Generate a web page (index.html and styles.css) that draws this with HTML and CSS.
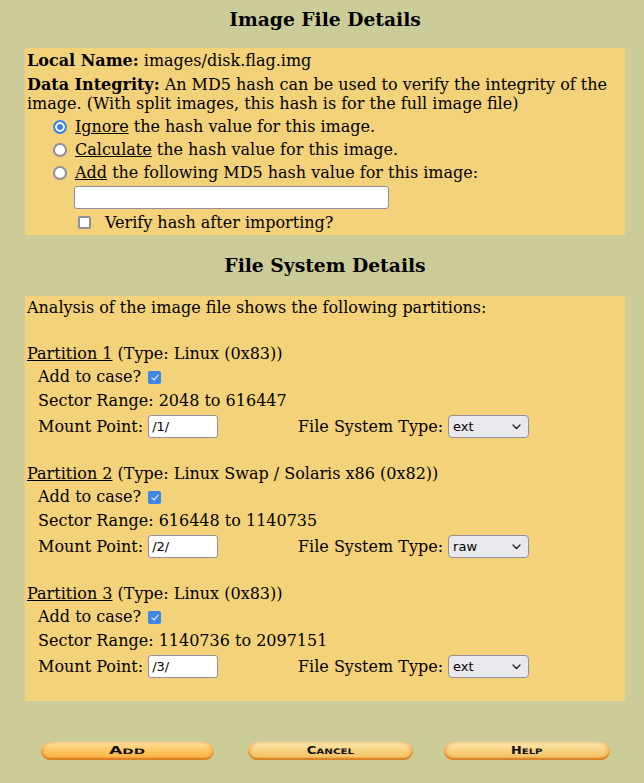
FILE: index.html
```html
<!DOCTYPE html>
<html>
<head>
<meta charset="utf-8">
<title>Add Image</title>
<link rel="stylesheet" href="styles.css">
</head>
<body>
<div class="page">
  <h3 class="title">Image File Details</h3>
  <div class="panel panel-image">
    <div class="row-name"><b>Local Name:</b> images/disk.flag.img</div>
    <div class="integrity">
      <div class="iline"><b>Data Integrity:</b> <span>An MD5 hash can be used to verify the integrity of the</span></div>
      <div class="iline">image. (With split images, this hash is for the full image file)</div>
    </div>
    <label class="opt opt-first"><input type="radio" class="radio" name="hash" checked><span><u>Ignore</u> the hash value for this image.</span></label>
    <label class="opt"><input type="radio" class="radio" name="hash"><span><u>Calculate</u> the hash value for this image.</span></label>
    <label class="opt"><input type="radio" class="radio" name="hash"><span><u>Add</u> the following MD5 hash value for this image:</span></label>
    <div class="md5row"><input type="text" class="field md5"></div>
    <label class="verify"><input type="checkbox" class="check"><span>Verify hash after importing?</span></label>
  </div>

  <h3 class="title title-fs">File System Details</h3>
  <div class="panel panel-fs">
    <div class="line">Analysis of the image file shows the following partitions:</div>
    <div class="line"></div>

    <div class="part">
      <div class="line"><u>Partition 1</u> (Type: Linux (0x83))</div>
      <label class="sub add"><span>Add to case?</span><input type="checkbox" class="check" checked></label>
      <div class="sub sector">Sector Range: 2048 to 616447</div>
      <div class="sub mount">
        <div class="cell"><span>Mount Point:</span><input type="text" class="field mp" value="/1/"></div>
        <div class="cell"><span>File System Type:</span><span class="selwrap"><select class="fs"><option selected>ext</option><option>fat</option><option>ntfs</option><option>raw</option><option>swap</option></select><svg class="chev" width="9" height="6" viewBox="0 0 9 6"><path d="M1 1 L4.5 4.5 L8 1" fill="none" stroke="#222" stroke-width="1.4" stroke-linecap="round" stroke-linejoin="round"/></svg></span></div>
      </div>
    </div>
    <div class="spacer"></div>

    <div class="part">
      <div class="line"><u>Partition 2</u> (Type: Linux Swap / Solaris x86 (0x82))</div>
      <label class="sub add"><span>Add to case?</span><input type="checkbox" class="check" checked></label>
      <div class="sub sector">Sector Range: 616448 to 1140735</div>
      <div class="sub mount">
        <div class="cell"><span>Mount Point:</span><input type="text" class="field mp" value="/2/"></div>
        <div class="cell"><span>File System Type:</span><span class="selwrap"><select class="fs"><option>ext</option><option>fat</option><option>ntfs</option><option selected>raw</option><option>swap</option></select><svg class="chev" width="9" height="6" viewBox="0 0 9 6"><path d="M1 1 L4.5 4.5 L8 1" fill="none" stroke="#222" stroke-width="1.4" stroke-linecap="round" stroke-linejoin="round"/></svg></span></div>
      </div>
    </div>
    <div class="spacer"></div>

    <div class="part">
      <div class="line"><u>Partition 3</u> (Type: Linux (0x83))</div>
      <label class="sub add"><span>Add to case?</span><input type="checkbox" class="check" checked></label>
      <div class="sub sector">Sector Range: 1140736 to 2097151</div>
      <div class="sub mount">
        <div class="cell"><span>Mount Point:</span><input type="text" class="field mp" value="/3/"></div>
        <div class="cell"><span>File System Type:</span><span class="selwrap"><select class="fs"><option selected>ext</option><option>fat</option><option>ntfs</option><option>raw</option><option>swap</option></select><svg class="chev" width="9" height="6" viewBox="0 0 9 6"><path d="M1 1 L4.5 4.5 L8 1" fill="none" stroke="#222" stroke-width="1.4" stroke-linecap="round" stroke-linejoin="round"/></svg></span></div>
      </div>
    </div>
  </div>

  <div class="buttons">
    <button class="btn btn-add" type="button"><span class="lbl"><span class="big">A</span>DD</span></button>
    <button class="btn btn-cancel" type="button"><span class="lbl"><span class="big">C</span>ANCEL</span></button>
    <button class="btn btn-help" type="button"><span class="lbl"><span class="big">H</span>ELP</span></button>
  </div>
</div>
</body>
</html>
```

FILE: styles.css
```css
body {
  margin: 8px 0 0 0;
  background: #cccc99;
  font-family: "DejaVu Serif", serif;
  font-size: 16px;
  color: #000;
}

.page {
  width: 600px;
  margin-left: 25px;
}

.title {
  font-size: 18.72px;
  font-weight: bold;
  text-align: center;
  line-height: 22px;
  margin: 0 0 18px 0;
}

.title-fs {
  margin: 19px 0 20px 0;
}

.panel {
  background: #f4d27a;
  padding: 0 2px;
}

/* form controls */
.radio {
  appearance: none;
  -webkit-appearance: none;
  box-sizing: border-box;
  width: 14px;
  height: 14px;
  border: 2px solid #8f8f9d;
  border-radius: 50%;
  background: #fff;
  flex: none;
}

.radio:checked {
  border-color: #3b84ea;
  background: #3b84ea;
  box-shadow: inset 0 0 0 2px #fff;
}

.check {
  appearance: none;
  -webkit-appearance: none;
  box-sizing: border-box;
  position: relative;
  width: 13px;
  height: 13px;
  border: 2px solid #8f8f9d;
  border-radius: 2px;
  background: #fff;
  flex: none;
}

.check:checked {
  border-color: #3b84ea;
  background: #3b84ea;
}

.check:checked::after {
  content: "";
  position: absolute;
  left: 2.5px;
  top: 0px;
  width: 3px;
  height: 6px;
  border-right: 1.6px solid #fff;
  border-bottom: 1.6px solid #fff;
  transform: rotate(40deg);
}

.field {
  box-sizing: border-box;
  height: 23px;
  margin: 0;
  padding: 0 3px;
  border: 1px solid #8f8f9d;
  border-radius: 3px;
  background: #fff;
  font-family: "DejaVu Sans", sans-serif;
  font-size: 13px;
  color: #000;
}

/* Image file panel */
.panel-image {
  padding-bottom: 1px;
}

.row-name {
  height: 25px;
  line-height: 25px;
}

.integrity {
  margin-top: 3px;
}

.iline {
  height: 18.5px;
  line-height: 18.5px;
  white-space: nowrap;
}

.opt {
  display: flex;
  align-items: center;
  height: 23px;
}

.opt-first {
  margin-top: 2px;
}

.opt .radio {
  margin: 1px 8px 0 26px;
}

.md5row {
  display: flex;
  align-items: center;
  height: 27px;
  padding-left: 47px;
}

.md5 {
  width: 315px;
}

.verify {
  display: flex;
  align-items: center;
  height: 23px;
}

.verify .check {
  margin: 0 14px 0 51px;
}

/* File system panel */
.panel-fs {
  padding-bottom: 22px;
}

.line {
  height: 23px;
  line-height: 23px;
}

.sub {
  padding-left: 11px;
}

.add {
  display: flex;
  align-items: center;
  height: 23px;
}

.add .check {
  margin: 1px 0 0 7px;
}

.sector {
  height: 25px;
  line-height: 25px;
}

.mount {
  display: grid;
  grid-template-columns: 260px auto;
  align-items: center;
  height: 26px;
}

.cell {
  display: flex;
  align-items: center;
  gap: 5px;
}

.mp {
  width: 70px;
}

.selwrap {
  position: relative;
  display: inline-flex;
}

.fs {
  appearance: none;
  -webkit-appearance: none;
  box-sizing: border-box;
  width: 81px;
  height: 23px;
  margin: 0;
  padding: 0 0 0 4px;
  border: 1px solid #8f8f9d;
  border-radius: 4px;
  background: #e9e9ed;
  font-family: "DejaVu Sans", sans-serif;
  font-size: 13px;
  color: #000;
}

.chev {
  position: absolute;
  right: 8px;
  top: 9px;
  pointer-events: none;
}

.spacer {
  height: 23px;
}

/* Buttons */
.buttons {
  display: flex;
  margin-top: 41px;
  padding-left: 16px;
}

.btn {
  display: flex;
  align-items: center;
  justify-content: center;
  height: 18px;
  padding: 0;
  border: 0;
  border-radius: 9px;
  color: #111;
  cursor: pointer;
  box-shadow: inset 0 -2px 1px rgba(214, 120, 30, 0.75), inset 3px 0 3px rgba(230, 150, 60, 0.45), inset -3px 0 3px rgba(230, 150, 60, 0.45);
}

.btn-add {
  width: 173px;
  background: linear-gradient(#ffe3a0 0%, #ffcb6c 40%, #ffb54a 80%, #f0922c 100%);
}

.btn-cancel {
  width: 165px;
  margin-left: 34px;
  background: linear-gradient(#fde9b4 0%, #f9d688 40%, #f5c566 80%, #e4983c 100%);
}

.btn-help {
  width: 166px;
  margin-left: 31px;
  background: linear-gradient(#fde9b4 0%, #f9d688 40%, #f5c566 80%, #e4983c 100%);
}

.lbl {
  display: inline-block;
  font-family: "DejaVu Sans", sans-serif;
  font-weight: bold;
  font-size: 7.6px;
  line-height: 10px;
  transform: scaleX(1.36);
}

.btn-add .lbl {
  transform: scaleX(1.8);
}

.btn-help .lbl {
  transform: scaleX(1.33);
}

.lbl .big {
  font-size: 9.6px;
}
```
